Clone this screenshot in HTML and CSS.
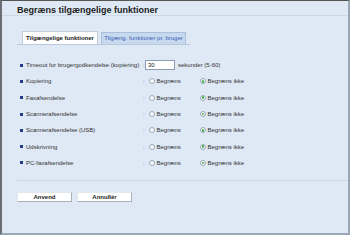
FILE: index.html
```html
<!DOCTYPE html>
<html lang="da">
<head>
  <meta charset="UTF-8">
  <title>Begræns tilgængelige funktioner</title>
  <link rel="stylesheet" href="styles.css">
</head>
<body>
  <div class="frame">
    <h1 class="title">Begræns tilgængelige funktioner</h1>

    <div class="tabs">
      <div class="tab active">Tilgængelige funktioner</div>
      <div class="tab">Tilgæng. funktioner pr. bruger</div>
    </div>

    <div class="rows">
      <div class="row">
        <div class="label"><span class="bullet"></span>Timeout for brugergodkendelse (kopiering)</div>
        <span class="colon">:</span>
        <input class="timeout" type="text" value="30">
        <span class="unit">sekunder (5-60)</span>
      </div>
      <div class="row">
        <div class="label"><span class="bullet"></span>Kopiering</div>
        <span class="colon">:</span>
        <span class="option first"><span class="radio"></span>Begræns</span>
        <span class="option"><span class="radio checked"></span>Begræns ikke</span>
      </div>
      <div class="row">
        <div class="label"><span class="bullet"></span>Faxafsendelse</div>
        <span class="colon">:</span>
        <span class="option first"><span class="radio"></span>Begræns</span>
        <span class="option"><span class="radio checked"></span>Begræns ikke</span>
      </div>
      <div class="row">
        <div class="label"><span class="bullet"></span>Scannerafsendelse</div>
        <span class="colon">:</span>
        <span class="option first"><span class="radio"></span>Begræns</span>
        <span class="option"><span class="radio checked"></span>Begræns ikke</span>
      </div>
      <div class="row">
        <div class="label"><span class="bullet"></span>Scannerafsendelse (USB)</div>
        <span class="colon">:</span>
        <span class="option first"><span class="radio"></span>Begræns</span>
        <span class="option"><span class="radio checked"></span>Begræns ikke</span>
      </div>
      <div class="row">
        <div class="label"><span class="bullet"></span>Udskrivning</div>
        <span class="colon">:</span>
        <span class="option first"><span class="radio"></span>Begræns</span>
        <span class="option"><span class="radio checked"></span>Begræns ikke</span>
      </div>
      <div class="row">
        <div class="label"><span class="bullet"></span>PC-faxafsendelse</div>
        <span class="colon">:</span>
        <span class="option first"><span class="radio"></span>Begræns</span>
        <span class="option"><span class="radio checked"></span>Begræns ikke</span>
      </div>
    </div>

    <div class="actions">
      <button>Anvend</button>
      <button>Annullér</button>
    </div>
  </div>
</body>
</html>
```

FILE: styles.css
```css
body {
  margin: 0;
  font-family: "Liberation Sans", Arial, sans-serif;
  color: #333;
}
.frame {
  box-sizing: border-box;
  width: 350px;
  height: 235px;
  background-color: #dfe9f5;
  border-top: 1px solid #555;
  border-left: 2px solid #6b6f75;
  border-right: 2px solid #9aa7b4;
  border-bottom: 2px solid #9aa7b4;
}
.title {
  margin: 0;
  height: 15px;
  padding: 4px 0 0 15px;
  box-sizing: border-box;
  font-size: 9px;
  line-height: 11px;
  color: #222;
  border-bottom: 1px solid #cbd8e8;
}
.tabs {
  display: flex;
  align-items: flex-end;
  width: 168px;
  margin: 15px 0 0 15px;
  padding-left: 5px;
  border-bottom: 1px solid #b9c8da;
}
.tab {
  flex-shrink: 0;
  box-sizing: border-box;
  width: 85px;
  height: 12px;
  line-height: 11px;
  text-align: center;
  white-space: nowrap;
  margin-right: 3px;
  font-size: 6px;
  color: #3c5cb4;
  background-color: #c6d9ef;
  border: 1px solid #a9bfdb;
  border-bottom: none;
}
.tab.active {
  width: 76px;
  height: 13px;
  line-height: 12px;
  color: #222;
  font-weight: bold;
  background-color: #fff;
  border-color: #c0ccd8;
}
.rows {
  margin-top: 12px;
}
.row {
  display: flex;
  align-items: center;
  height: 16.3px;
  padding-left: 18px;
  font-size: 6px;
}
.label {
  display: flex;
  align-items: center;
  width: 123px;
}
.bullet {
  width: 3px;
  height: 3px;
  margin-right: 3px;
  background-color: #1f3e8c;
}
.colon {
  width: 3px;
  color: #666;
}
.timeout {
  box-sizing: border-box;
  width: 30px;
  height: 10px;
  margin: 0 3px 0 -1px;
  padding: 0 2px;
  font-family: inherit;
  font-size: 6px;
  color: #222;
  background-color: #fff;
  border: 1px solid #8d9cae;
}
.option {
  display: flex;
  align-items: center;
  width: 51px;
}
.option.first {
  margin-left: 3px;
}
.radio {
  box-sizing: border-box;
  width: 6px;
  height: 6px;
  margin-right: 1.5px;
  border: 1px solid #98a6b6;
  border-radius: 50%;
  background-color: #fafcfe;
  display: flex;
  align-items: center;
  justify-content: center;
}
.radio.checked::after {
  content: "";
  width: 2.5px;
  height: 2.5px;
  border-radius: 50%;
  background-color: #3fb04a;
}
.actions {
  display: flex;
  gap: 5px;
  margin: 9px 0 0 15px;
  padding-top: 11px;
  border-top: 1px solid #cad7e6;
}
.actions button {
  box-sizing: border-box;
  width: 55px;
  height: 10px;
  padding: 0;
  font-family: inherit;
  font-size: 6px;
  font-weight: bold;
  color: #222;
  background-color: #fff;
  border: 1px solid #a8b0b8;
  border-top-color: #e4e8ec;
  border-left-color: #e4e8ec;
}
```
